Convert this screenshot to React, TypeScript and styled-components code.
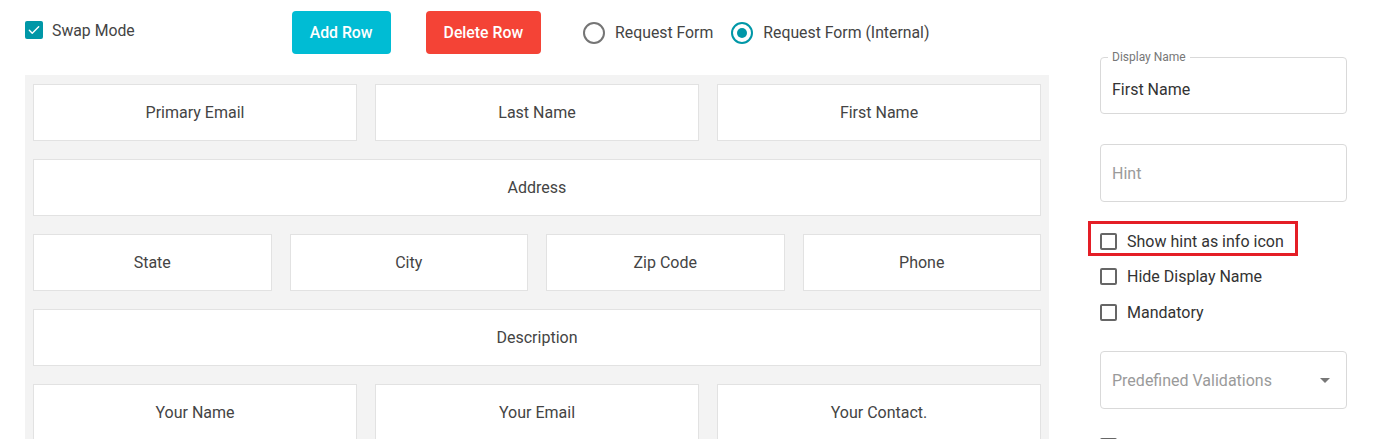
import React from "react";
import styled, { createGlobalStyle } from "styled-components";

const Global = createGlobalStyle`
  html, body { margin: 0; padding: 0; background: #ffffff; }
  body { font-family: Roboto, "Noto Sans", Arial, sans-serif; color: #333; }
  * { box-sizing: border-box; }
`;

const Page = styled.div`
  display: flex;
  align-items: flex-start;
  width: 1390px;
  height: 439px;
  overflow: hidden;
`;

const LeftColumn = styled.div`
  width: 1049px;
  padding-left: 25px;
  flex-shrink: 0;
`;

const TopBar = styled.div`
  display: flex;
  align-items: center;
  height: 75px;
  padding: 11px 0 21px;
`;

const SwapToggle = styled.label`
  display: flex;
  align-items: center;
  gap: 9px;
  margin-bottom: 5px;
  font-size: 15.8px;
  color: #444;
`;

const CheckedBox = styled.span`
  width: 18px;
  height: 18px;
  border-radius: 2px;
  background: #0097a7;
  display: inline-flex;
  align-items: center;
  justify-content: center;
`;

const ActionButton = styled.button<{ $tone: "cyan" | "red"; $gap: number }>`
  height: 43px;
  padding: 0 18px;
  margin-left: ${(p) => p.$gap}px;
  border: none;
  border-radius: 4px;
  background: ${(p) => (p.$tone === "cyan" ? "#00bcd4" : "#f44336")};
  color: #fff;
  font-family: Roboto, Arial, sans-serif;
  font-size: 15.8px;
  font-weight: 500;
`;

const RadioGroup = styled.div`
  display: flex;
  align-items: center;
  gap: 18px;
  margin-left: 42px;
`;

const RadioOption = styled.label`
  display: flex;
  align-items: center;
  gap: 10px;
  font-size: 15.8px;
  color: #444;
`;

const RadioCircle = styled.span<{ $on: boolean }>`
  width: 22px;
  height: 22px;
  border-radius: 50%;
  border: 2px solid ${(p) => (p.$on ? "#0097a7" : "#757575")};
  display: inline-flex;
  align-items: center;
  justify-content: center;
  &::after {
    content: "";
    width: 10px;
    height: 10px;
    border-radius: 50%;
    background: ${(p) => (p.$on ? "#0097a7" : "transparent")};
  }
`;

const Canvas = styled.div`
  background: #f3f3f3;
  padding: 9px 8px 20px;
  display: flex;
  flex-direction: column;
  gap: 18px;
`;

const FieldRow = styled.div<{ $cols: number }>`
  display: grid;
  grid-template-columns: repeat(${(p) => p.$cols}, 1fr);
  gap: 18px;
`;

const FieldCell = styled.div`
  height: 57px;
  background: #fff;
  border: 1px solid #e2e2e2;
  display: flex;
  align-items: center;
  justify-content: center;
  font-size: 16px;
  color: #444;
`;

const RightColumn = styled.div`
  width: 247px;
  margin-left: 51px;
  padding-top: 57px;
  display: flex;
  flex-direction: column;
`;

const Outlined = styled.div<{ $mt?: number; $h?: number; $pt?: number }>`
  position: relative;
  height: ${(p) => p.$h ?? 58}px;
  margin-top: ${(p) => p.$mt ?? 0}px;
  border: 1px solid #d9d9d9;
  border-radius: 4px;
  display: flex;
  align-items: center;
  padding: ${(p) => p.$pt ?? 0}px 12px 0 11px;
  font-size: 16px;
`;

const FloatLabel = styled.span`
  position: absolute;
  left: 7px;
  top: -8px;
  padding: 0 4px;
  background: #fff;
  font-size: 12px;
  color: #777;
`;

const Value = styled.span<{ $placeholder?: boolean }>`
  flex: 1;
  color: ${(p) => (p.$placeholder ? "#9a9a9a" : "#333")};
`;

const Caret = styled.span`
  width: 0;
  height: 0;
  border-left: 5px solid transparent;
  border-right: 5px solid transparent;
  border-top: 5px solid #777;
  margin-right: 4px;
`;

const Options = styled.div`
  display: flex;
  flex-direction: column;
  gap: 12px;
  margin-top: 19px;
`;

const Highlight = styled.div`
  align-self: flex-start;
  margin-left: -12px;
  margin-bottom: -4px;
  border: 3px solid #e41e26;
  padding: 5px 11px 0 9px;
`;

const OptionRow = styled.label`
  display: flex;
  align-items: center;
  gap: 10px;
  height: 24px;
  font-size: 16px;
  color: #333;
`;

const EmptyBox = styled.span<{ $mt?: number }>`
  width: 17px;
  height: 17px;
  margin-top: ${(p) => p.$mt ?? 0}px;
  border: 2px solid #666;
  border-radius: 2px;
`;

const Check = () => (
  <svg width="14" height="14" viewBox="0 0 24 24" fill="none">
    <path d="M4 12.5l5 5L20 6.5" stroke="#fff" strokeWidth="2.4" strokeLinecap="round" strokeLinejoin="round" />
  </svg>
);

const rows: string[][] = [
  ["Primary Email", "Last Name", "First Name"],
  ["Address"],
  ["State", "City", "Zip Code", "Phone"],
  ["Description"],
  ["Your Name", "Your Email", "Your Contact."],
];

export default function App() {
  return (
    <>
      <Global />
      <Page>
        <LeftColumn>
          <TopBar>
            <SwapToggle>
              <CheckedBox>
                <Check />
              </CheckedBox>
              Swap Mode
            </SwapToggle>
            <ActionButton $tone="cyan" $gap={157}>Add Row</ActionButton>
            <ActionButton $tone="red" $gap={35}>Delete Row</ActionButton>
            <RadioGroup>
              <RadioOption>
                <RadioCircle $on={false} />
                Request Form
              </RadioOption>
              <RadioOption>
                <RadioCircle $on={true} />
                Request Form (Internal)
              </RadioOption>
            </RadioGroup>
          </TopBar>
          <Canvas>
            {rows.map((r, i) => (
              <FieldRow key={i} $cols={r.length}>
                {r.map((f) => (
                  <FieldCell key={f}>{f}</FieldCell>
                ))}
              </FieldRow>
            ))}
          </Canvas>
        </LeftColumn>
        <RightColumn>
          <Outlined $h={57} $pt={8}>
            <FloatLabel>Display Name</FloatLabel>
            <Value>First Name</Value>
          </Outlined>
          <Outlined $mt={30}>
            <Value $placeholder>Hint</Value>
          </Outlined>
          <Options>
            <Highlight>
              <OptionRow>
                <EmptyBox />
                Show hint as info icon
              </OptionRow>
            </Highlight>
            <OptionRow>
              <EmptyBox />
              Hide Display Name
            </OptionRow>
            <OptionRow>
              <EmptyBox />
              Mandatory
            </OptionRow>
          </Options>
          <Outlined $mt={27}>
            <Value $placeholder>Predefined Validations</Value>
            <Caret />
          </Outlined>
          <EmptyBox $mt={29} />
        </RightColumn>
      </Page>
    </>
  );
}
